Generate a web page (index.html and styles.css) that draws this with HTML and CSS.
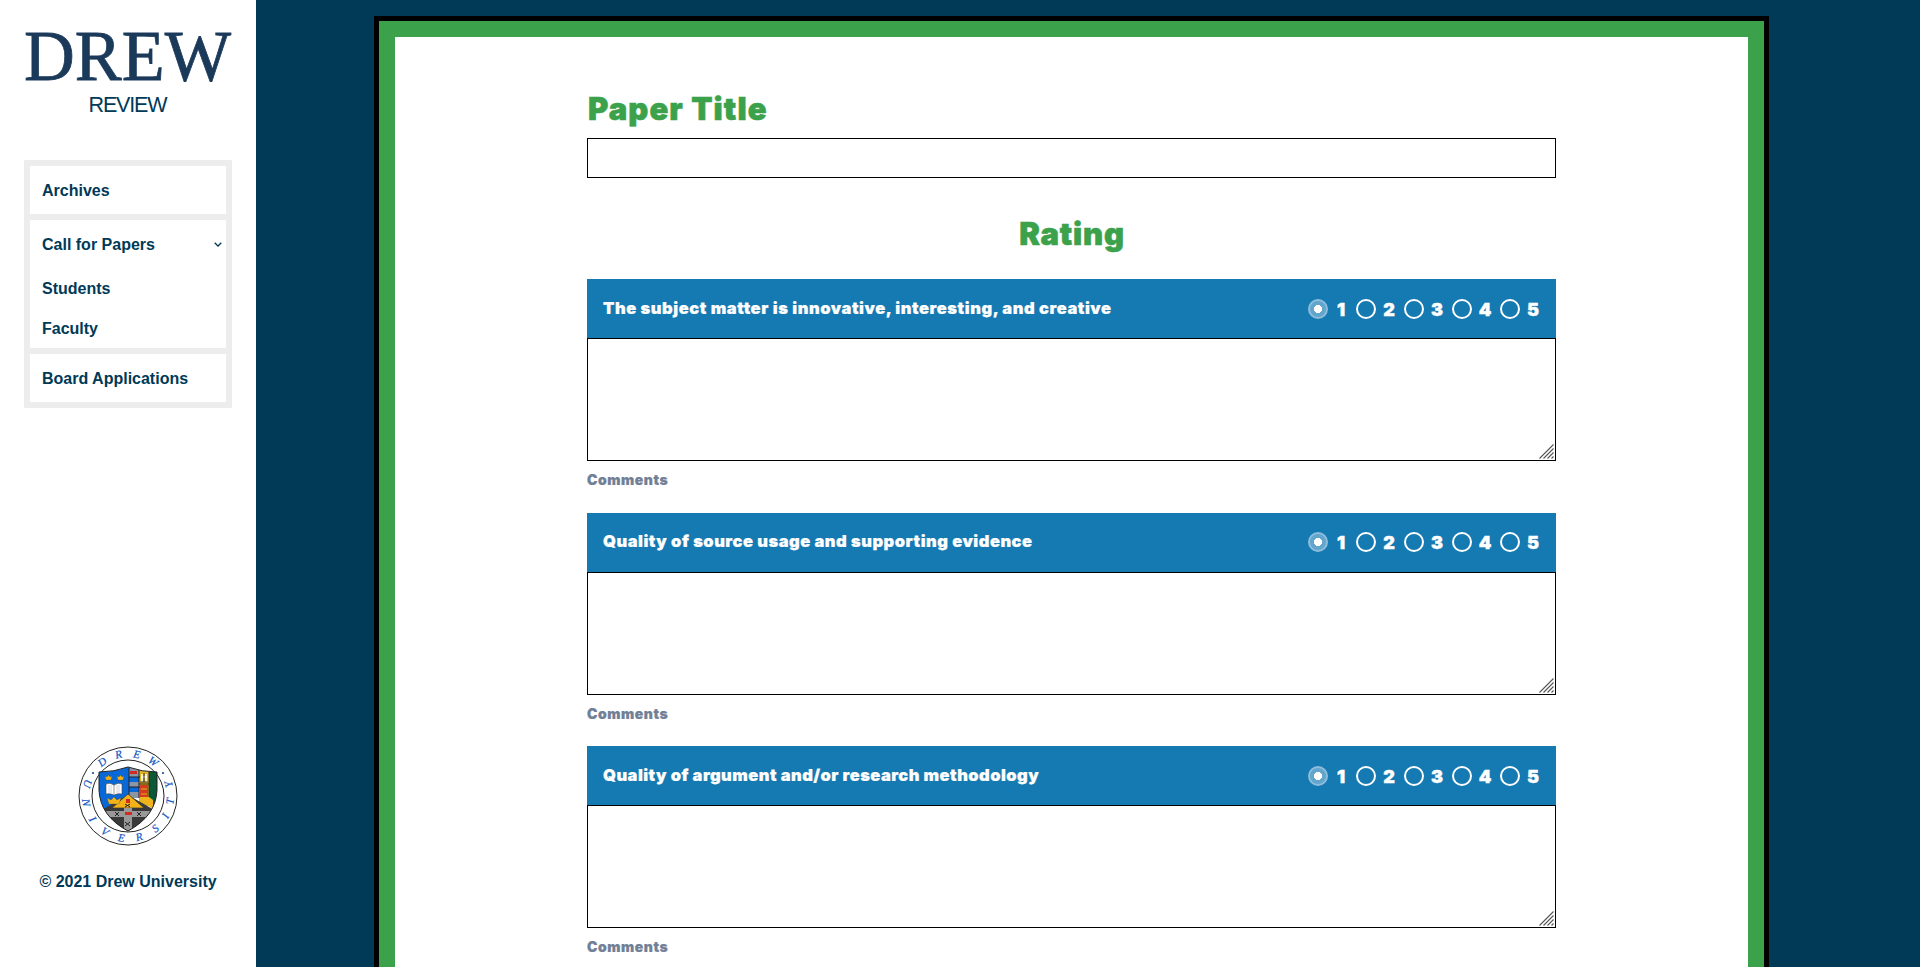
FILE: index.html
```html
<!DOCTYPE html>
<html lang="en"><head><meta charset="utf-8"><title>Drew Review</title><link rel="stylesheet" href="styles.css"></head>
<body>
<aside class="sidebar">
  <svg class="wordmark" viewBox="0 0 208 70" role="img" aria-label="Drew"><text x="0" y="54" textLength="207" lengthAdjust="spacingAndGlyphs">DREW</text></svg>
  <div class="review">REVIEW</div>
  <nav class="menu">
    <a class="item">Archives</a>
    <div class="group">
      <a class="item">Call for Papers <svg class="chev" viewBox="0 0 8 5"><path d="M.7 .8 4 4 7.3 .8"/></svg></a>
      <a class="sub">Students</a>
      <a class="sub">Faculty</a>
    </div>
    <a class="item">Board Applications</a>
  </nav>
  <svg class="seal" viewBox="0 0 100 100">
    <circle cx="50" cy="50" r="49" fill="#fff" stroke="#222"/>
    <circle cx="50" cy="50" r="36" fill="#fff" stroke="#222"/>
    <g class="ring">
      <text transform="rotate(-37 50 50)" x="50" y="11">D</text><text transform="rotate(-13 50 50)" x="50" y="11">R</text><text transform="rotate(12 50 50)" x="50" y="11">E</text><text transform="rotate(36 50 50)" x="50" y="11">W</text>
      <text transform="rotate(107 50 50)" x="50" y="96">U</text><text transform="rotate(81 50 50)" x="50" y="96">N</text><text transform="rotate(57 50 50)" x="50" y="96">I</text><text transform="rotate(33 50 50)" x="50" y="96">V</text><text transform="rotate(9 50 50)" x="50" y="96">E</text><text transform="rotate(-15 50 50)" x="50" y="96">R</text><text transform="rotate(-40 50 50)" x="50" y="96">S</text><text transform="rotate(-62 50 50)" x="50" y="96">I</text><text transform="rotate(-83 50 50)" x="50" y="96">T</text><text transform="rotate(-106 50 50)" x="50" y="96">Y</text>
    </g>
    <circle cx="15" cy="27" r="1.1" fill="#124bb0"/><circle cx="85" cy="27" r="1.100" fill="#124bb0"/>
    <clipPath id="shield"><path d="M21 26Q36 26 50 21Q64 26 79 26V44Q78 70 50 85Q22 70 21 44Z"/></clipPath>
    <g clip-path="url(#shield)">
      <path fill="#0868d8" d="M20 20h31v65H20z"/><path fill="#8c96a5" d="M51 20h11v32H51z"/><path fill="#0868d8" d="M51 31h11v5H51zM51 41h11v5H51z"/><path fill="#e3b51c" d="M61 20h10v40H61z"/><path fill="#d23b20" d="M62 39h8v12h-8z"/><path fill="#0c5938" d="M71 20h10v40H71z"/>
      <path d="M51 31h11M51 41h11M61 22v30M71 22v35M61 38h10M51 22v28" stroke="#222" fill="none"/>
      <path stroke="#fff" d="M64 28v8M68 28v8M63 31h6" stroke-width="1.500"/><path stroke="#333" d="M66 27v9M62 36h8"/><path d="M63 43h6M63 48h6" stroke="#e3b51c"/>
      <path fill="#393939" d="M20 66 50 49 80 66v22H20z"/><path fill="#f2b31a" d="M62 51h9l4 3v10z"/><path fill="#f2b31a" stroke="#333" stroke-width=".7" d="m34 62 16-14 16 14z"/><path fill="#999" d="M46 62h8v26h-8zM24 65h52v6H24z"/><path fill="#d22c22" d="M47 66h7v3h-7zM52 25h7v3h-7zM48 53h4v4h-4z"/>
      <path d="m47 58 5 3m-5 0 5-3M37 66l4 4m0-4-4 4M59 66l4 4m0-4-4 4M47 76l5 4m0-4-5 4" stroke="#222"/>
    </g>
    <path d="M21 26Q36 26 50 21Q64 26 79 26V44Q78 70 50 85Q22 70 21 44Z" fill="none" stroke="#222"/>
    <path fill="#fff" stroke="#444" stroke-width=".6" d="M28 38q4-2 8 1q4-3 8-1v10q-4-1-8 1q-4-2-8-1z"/><path d="M36 39v9" stroke="#555" stroke-width=".6"/><path d="M30 40h4m-4 2h4m-4 2h4m-4 2h4m4-6h4m-4 2h4m-4 2h4m-4 2h4" stroke="#aaa" stroke-width=".5"/>
    <path fill="#f2b31a" stroke="#554510" stroke-width=".3" d="m27 30 2 1 1.500-2 1.500 2 2-1-1 4h-5zM39 30l2 1 1.500-2 1.500 2 2-1-1 4h-5zM29 52l4 2 3-3 3 3 4-2-2 6H31z"/>
  </svg>
  <div class="copyright">© 2021 Drew University</div>
</aside>
<main class="main"><form class="card">
  <label class="heading paper" for="title">Paper Title</label>
  <input class="title-input" id="title">
  <h2 class="heading rating">Rating</h2>
  <section class="question"><div class="bar"><span class="q q1">The subject matter is innovative, interesting, and creative</span><div class="radios"><i class="radio on"></i><b>1</b><i class="radio"></i><b>2</b><i class="radio"></i><b>3</b><i class="radio"></i><b>4</b><i class="radio"></i><b>5</b></div></div><div class="field"><textarea class="area"></textarea><svg class="grip" viewBox="0 0 15 15"><path d="M.5 14.500l14-14M4.500 14.500l10-10M8.500 14.500l6-6M12.500 14.500l2-2"/></svg></div><div class="comments">Comments</div></section>
  <section class="question"><div class="bar"><span class="q q2">Quality of source usage and supporting evidence</span><div class="radios"><i class="radio on"></i><b>1</b><i class="radio"></i><b>2</b><i class="radio"></i><b>3</b><i class="radio"></i><b>4</b><i class="radio"></i><b>5</b></div></div><div class="field"><textarea class="area"></textarea><svg class="grip" viewBox="0 0 15 15"><path d="M.5 14.500l14-14M4.500 14.500l10-10M8.500 14.500l6-6M12.500 14.500l2-2"/></svg></div><div class="comments">Comments</div></section>
  <section class="question"><div class="bar"><span class="q q3">Quality of argument and/or research methodology</span><div class="radios"><i class="radio on"></i><b>1</b><i class="radio"></i><b>2</b><i class="radio"></i><b>3</b><i class="radio"></i><b>4</b><i class="radio"></i><b>5</b></div></div><div class="field"><textarea class="area"></textarea><svg class="grip" viewBox="0 0 15 15"><path d="M.5 14.500l14-14M4.500 14.500l10-10M8.500 14.500l6-6M12.500 14.500l2-2"/></svg></div><div class="comments">Comments</div></section>
</form></main>
</body></html>
```
FILE: styles.css
```css
* { box-sizing: border-box; }
body { margin: 0; height: 967px; overflow: hidden; display: flex; background: #003a57; font-family: "Liberation Sans", Arial, sans-serif; color: #003a57; }
.sidebar { width: 256px; height: 967px; flex: none; background: #fff; display: flex; flex-direction: column; align-items: center; padding: 26px 24px 0; }
.wordmark { width: 208px; height: 70px; flex: none; overflow: visible; }
.wordmark text { font: 71px "Liberation Serif", serif; fill: #1b3a5a; stroke: #1b3a5a; stroke-width: .8px; }
.review { font-size: 21.500px; line-height: 24px; margin-top: -3px; letter-spacing: -1.150px; padding-right: 1px; }
.menu { width: 208px; margin-top: 43px; background: #ededed; padding: 6px; display: flex; flex-direction: column; gap: 6px; font-weight: 700; font-size: 16px; }
.item { height: 48px; padding: 2px 4px 0 12px; background: #fff; display: flex; align-items: center; justify-content: space-between; }
.group { background: #fff; height: 128px; }
.chev { width: 8px; height: 5px; margin-top: -2px; fill: none; stroke: #003a57; stroke-width: 1.3; }
.sub { display: block; height: 40px; line-height: 42px; padding-left: 12px; }
.seal { width: 100px; height: 100px; margin-top: 338px; flex: none; }
.ring text { font: italic 11px "Liberation Serif", serif; fill: #1255c4; stroke: #1255c4; stroke-width: .2px; text-anchor: middle; }
.copyright { font-weight: 700; font-size: 16px; line-height: 24px; margin-top: 24px; }
.main { flex: 1; height: 967px; overflow: hidden; padding: 16px 0 0 118px; }
.card { width: 1395px; height: 951px; overflow: hidden; border: 5px solid #000; border-bottom: 0; background: #fff; box-shadow: inset 16px 0 #3ba24b, inset -16px 0 #3ba24b, inset 0 16px #3ba24b; padding: 64px 208px 0; font-family: Inter, "Liberation Sans", sans-serif; font-weight: 900; }
.heading { display: block; color: #3ba24b; font-size: 31px; font-weight: 900; line-height: 48px; margin: 0; letter-spacing: 1.100px; -webkit-text-stroke: .6px #3ba24b; }
.paper { padding-left: 1px; }
.title-input { display: block; width: 969px; height: 40px; border: 1px solid #000; margin: 5px 0 0; padding: 0 12px; }
.rating { text-align: center; margin: 32px 0 21px; padding-left: 1px; letter-spacing: .8px; }
.question { height: 233.500px; }
.bar { height: 59px; background: #1579b2; color: #fff; display: flex; align-items: center; justify-content: space-between; padding: 0 16px; }
.q { font-size: 16.500px; padding-bottom: 2px; -webkit-text-stroke: .2px #fff; }
.q1 { letter-spacing: .55px; }
.q2 { letter-spacing: .5px; }
.q3 { letter-spacing: .45px; }
.radios { display: flex; align-items: center; }
.radio { width: 20px; height: 20px; border: 2px solid #fff; border-radius: 50%; }
.on { border-color: #8dbddb; background: radial-gradient(circle, #fff 0 3.8px, #62a5cd 4.3px); }
.radios b { width: 28px; padding: 1px 2px 0 0; text-align: center; font-size: 18px; font-weight: 900; -webkit-text-stroke: .4px #fff; }
.radios b:last-child { width: 20px; padding-right: 1px; text-align: right; }
.field { position: relative; height: 123px; }
.area { display: block; width: 969px; height: 123px; margin: 0; border: 1px solid #000; resize: none; }
.grip { position: absolute; right: 2px; bottom: 2px; width: 15px; height: 15px; fill: none; stroke: #555; stroke-width: 1.1; }
.comments { color: #718096; font-size: 14px; line-height: 20px; margin-top: 9px; letter-spacing: .55px; -webkit-text-stroke: .2px #718096; }
```
